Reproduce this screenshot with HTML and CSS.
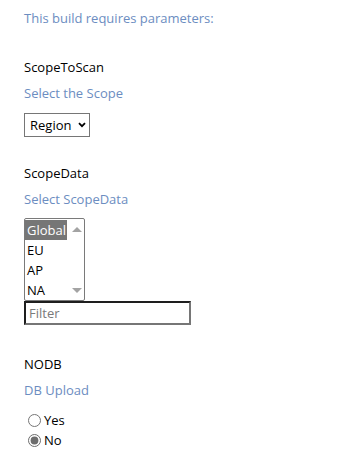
FILE: index.html
```html
<!DOCTYPE html>
<html>
<head>
    <title>Build parameters</title>
    <meta charset="UTF-8">
    <meta name="viewport" content="width=device-width, initial-scale=1.0">
    <link rel="stylesheet" href="styles.css">
</head>

<body>
    <div class="params">
        <p class="intro">This build requires parameters:</p>

        <div class="param">
            <div class="param-name">ScopeToScan</div>
            <div class="param-desc">Select the Scope</div>
            <div class="dropdown">
                <select class="dropdown-select">
                    <option>Region</option>
                    <option>Global</option>
                </select>
                <svg class="dropdown-chevron" width="8" height="6" viewBox="0 0 8 6">
                    <path d="M1 1.2 L4 4.2 L7 1.2" fill="none" stroke="#000" stroke-width="1.8"/>
                </svg>
            </div>
        </div>

        <div class="param param-list">
            <div class="param-name">ScopeData</div>
            <div class="param-desc">Select ScopeData</div>
            <div class="listbox">
                <div class="listbox-items">
                    <div class="listbox-item selected"><span>Global</span></div>
                    <div class="listbox-item"><span>EU</span></div>
                    <div class="listbox-item"><span>AP</span></div>
                    <div class="listbox-item"><span>NA</span></div>
                </div>
                <div class="listbox-scroll">
                    <span class="arrow-up"></span>
                    <span class="arrow-down"></span>
                </div>
            </div>
            <input type="text" class="filter" placeholder="Filter">
        </div>

        <div class="param">
            <div class="param-name">NODB</div>
            <div class="param-desc">DB Upload</div>
            <div class="radios">
                <label class="radio"><input type="radio" name="nodb" value="yes"> Yes</label>
                <label class="radio"><input type="radio" name="nodb" value="no" checked> No</label>
            </div>
        </div>
    </div>
</body>
</html>
```

FILE: styles.css
```css
:root {
    --muted-color: #6c8dc1;
    --border-color: #767676;
}

body {
    margin: 0;
    font-family: "Segoe UI", "Open Sans", sans-serif;
    font-size: 13px;
    color: #000;
    background: #fff;
}

.params {
    padding: 8px 24px 0;
}

.intro {
    margin: 0;
    line-height: 20px;
    color: var(--muted-color);
}

.param {
    margin-top: 29px;
}

.param-list {
    margin-top: 26px;
}

.param-name {
    line-height: 20px;
}

.param-desc {
    margin-top: 6px;
    line-height: 20px;
    color: var(--muted-color);
}

.dropdown {
    position: relative;
    display: inline-block;
    margin-top: 10px;
}

.dropdown-select {
    appearance: none;
    -webkit-appearance: none;
    width: 66px;
    height: 24px;
    padding: 0 0 0 5px;
    border: 1px solid var(--border-color);
    border-radius: 0;
    background: #fff;
    font: inherit;
    color: #000;
}

.dropdown-chevron {
    position: absolute;
    right: 4px;
    top: 9px;
    pointer-events: none;
}

.listbox {
    display: flex;
    width: 59px;
    margin-top: 9px;
    border: 1px solid #7a7a7a;
    border-radius: 2px;
    background: #fff;
}

.listbox-items {
    flex: 1;
    padding-top: 1px;
}

.listbox-item {
    height: 20px;
    line-height: 20px;
}

.listbox-item span {
    display: inline-block;
    padding: 0 1px 0 2px;
}

.listbox-item.selected span {
    background: #767676;
    color: #fff;
}

.listbox-scroll {
    width: 15px;
    display: flex;
    flex-direction: column;
    justify-content: space-between;
    align-items: center;
    padding: 8px 0 7px;
}

.arrow-up,
.arrow-down {
    width: 0;
    height: 0;
    border-left: 5px solid transparent;
    border-right: 5px solid transparent;
}

.arrow-up {
    border-bottom: 5px solid #a3a3a3;
}

.arrow-down {
    border-top: 5px solid #a3a3a3;
}

.filter {
    display: block;
    box-sizing: border-box;
    width: 167px;
    height: 24px;
    margin: 0;
    padding: 0 3px;
    border: 2px solid;
    border-color: #1e1e1e #767676 #767676 #1e1e1e;
    font: inherit;
    outline: none;
}

.filter::placeholder {
    color: #7a7a7a;
}

.radios {
    margin-top: 10px;
    padding-left: 4px;
}

.radio {
    display: flex;
    align-items: center;
    height: 20px;
}

.radio input {
    width: 13px;
    height: 13px;
    margin: 0 3px 0 0;
    accent-color: #6d6d6d;
}
```
